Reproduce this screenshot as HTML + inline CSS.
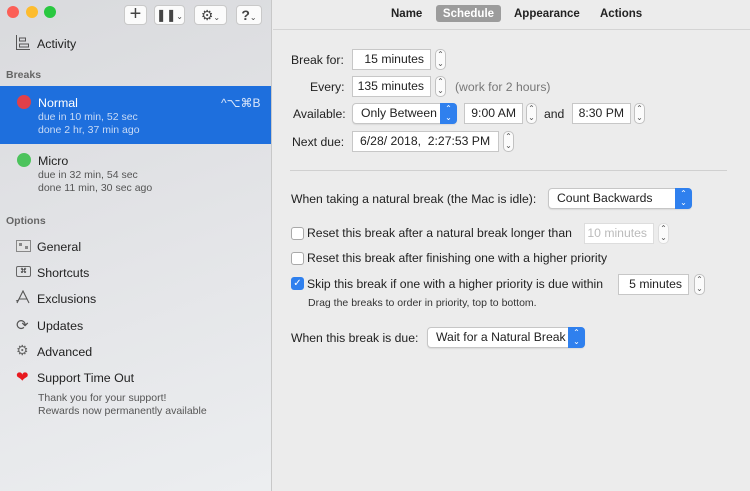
<!DOCTYPE html>
<html><head><meta charset="utf-8"><style>
*{margin:0;padding:0;box-sizing:border-box}
body{width:750px;height:491px;overflow:hidden;font-family:"Liberation Sans",sans-serif;font-size:12.2px;color:#222;background:#ececec;position:relative}
.a{position:absolute;white-space:nowrap}
#side{position:absolute;left:0;top:0;width:272px;height:491px;background:linear-gradient(160deg,#d9dadd 0%,#e3e4e7 50%,#eceef0 100%);border-right:1px solid #c8c8c8}
.tl{width:12px;height:12px;border-radius:50%;top:6px}
.tb{top:5px;height:20px;background:#fbfbfb;border:1px solid #c9c9c9;border-radius:4px;font-size:14px;color:#444;text-align:center;line-height:18px}
.sec{font-size:10.5px;color:#666;font-weight:bold}
.it{font-size:12.4px;color:#222}
.sub{font-size:10.5px;color:#555}
.fld{background:#fff;border:1px solid #c7c7c7;height:21px;font-size:12.2px;line-height:19px;text-align:right;padding-right:6px}
.st{width:11px;height:21px;border:1px solid #c2c2c2;border-radius:5px;background:#fbfbfb;font-size:8px;line-height:9px;text-align:center;color:#555}
.pop{background:#fff;border:1px solid #c6c6c6;border-radius:4px;height:21px;line-height:19px;padding-left:8px;box-shadow:0 1px 1px rgba(0,0,0,.08)}
.pop b{position:absolute;right:-1px;top:-1px;width:17px;height:21px;background:#2f80ee;border-radius:0 4px 4px 0;color:#fff;font-size:8px;line-height:9px;text-align:center;padding-top:1px;font-weight:normal}
.cb{width:13px;height:13px;border:1px solid #a9a9a9;border-radius:3px;background:#fff}
</style></head><body>
<div id="side">
<div class="a tl" style="left:7px;background:#fc5f57"></div>
<div class="a tl" style="left:26px;background:#fdbc2e"></div>
<div class="a tl" style="left:44px;background:#29c840"></div>
<div class="a tb" style="left:124px;width:23px;font-size:20px;line-height:17px">+</div>
<div class="a tb" style="left:154px;width:31px;font-size:12px">❚❚<span style="font-size:8px">⌄</span></div>
<div class="a tb" style="left:194px;width:33px">⚙<span style="font-size:8px">⌄</span></div>
<div class="a tb" style="left:236px;width:26px;font-weight:bold">?<span style="font-size:8px;font-weight:normal">⌄</span></div>
<svg class="a" style="left:16px;top:35px" width="14" height="15"><path d="M0.5 0v14.5H14M3.5 3h6v3h-6zM3.5 9h9v3h-9z" fill="none" stroke="#555"/></svg>
<div class="a it" style="left:37px;top:37px">Activity</div>
<div class="a sec" style="left:6px;top:69px">Breaks</div>
<div class="a" style="left:0;top:86px;width:271px;height:58px;background:#1e6fdd"></div>
<div class="a" style="left:17px;top:95px;width:14px;height:14px;border-radius:50%;background:#e0404a"></div>
<div class="a it" style="left:38px;top:96px;color:#fff">Normal</div>
<div class="a" style="left:221px;top:96px;color:#dbe7fa;font-size:12px">^⌥⌘B</div>
<div class="a sub" style="left:38px;top:111px;color:#c9dbf6">due in 10 min, 52 sec</div>
<div class="a sub" style="left:38px;top:124px;color:#c9dbf6">done 2 hr, 37 min ago</div>
<div class="a" style="left:17px;top:153px;width:14px;height:14px;border-radius:50%;background:#4cc35c"></div>
<div class="a it" style="left:38px;top:154px">Micro</div>
<div class="a sub" style="left:38px;top:169px">due in 32 min, 54 sec</div>
<div class="a sub" style="left:38px;top:182px">done 11 min, 30 sec ago</div>
<div class="a sec" style="left:6px;top:215px">Options</div>
<svg class="a" style="left:16px;top:240px" width="15" height="12"><rect x=".5" y=".5" width="14" height="11" fill="#e4e4e4" stroke="#888"/><rect x="3" y="3" width="3" height="3" fill="#888"/><rect x="9" y="6" width="3" height="3" fill="#888"/></svg>
<div class="a it" style="left:37px;top:240px">General</div>
<div class="a" style="left:16px;top:266px;width:15px;height:11px;border:1px solid #666;border-radius:2px;font-size:7px;text-align:center;line-height:9px">⌘</div>
<div class="a it" style="left:37px;top:266px">Shortcuts</div>
<svg class="a" style="left:15px;top:290px" width="16" height="14"><path d="M2 13L8 1L14 13M4 9h8M1 11l3-1" fill="none" stroke="#555" stroke-width="1.1"/></svg>
<div class="a it" style="left:37px;top:292px">Exclusions</div>
<div class="a" style="left:16px;top:316px;font-size:15px;color:#555">⟳</div>
<div class="a it" style="left:37px;top:319px">Updates</div>
<div class="a" style="left:16px;top:342px;font-size:14px;color:#666">⚙</div>
<div class="a it" style="left:37px;top:345px">Advanced</div>
<div class="a" style="left:16px;top:368px;font-size:15px;color:#e8191f">❤</div>
<div class="a it" style="left:37px;top:371px">Support Time Out</div>
<div class="a sub" style="left:38px;top:392px">Thank you for your support!</div>
<div class="a sub" style="left:38px;top:405px">Rewards now permanently available</div>
</div>

<div class="a" style="left:273px;top:29px;width:477px;height:1px;background:#d4d4d4"></div>
<div class="a" style="left:391px;top:8px;font-weight:bold;font-size:11.5px">Name</div>
<div class="a" style="left:436px;top:5px;width:65px;height:17px;background:#9c9c9c;border-radius:3px;color:#fff;font-weight:bold;font-size:11.5px;text-align:center;line-height:18px">Schedule</div>
<div class="a" style="left:514px;top:8px;font-weight:bold;font-size:11.5px">Appearance</div>
<div class="a" style="left:600px;top:8px;font-weight:bold;font-size:11.5px">Actions</div>

<div class="a" style="left:291px;top:53px">Break for:</div>
<div class="a fld" style="left:352px;top:49px;width:79px">15 minutes</div>
<div class="a st" style="left:435px;top:49px">⌃<br>⌄</div>
<div class="a" style="left:310px;top:80px">Every:</div>
<div class="a fld" style="left:352px;top:76px;width:79px">135 minutes</div>
<div class="a st" style="left:435px;top:76px">⌃<br>⌄</div>
<div class="a" style="left:455px;top:80px;color:#777">(work for 2 hours)</div>
<div class="a" style="left:293px;top:107px">Available:</div>
<div class="a pop" style="left:352px;top:103px;width:105px">Only Between<b>⌃<br>⌄</b></div>
<div class="a fld" style="left:464px;top:103px;width:59px">9:00 AM</div>
<div class="a st" style="left:526px;top:103px">⌃<br>⌄</div>
<div class="a" style="left:544px;top:107px">and</div>
<div class="a fld" style="left:572px;top:103px;width:59px">8:30 PM</div>
<div class="a st" style="left:634px;top:103px">⌃<br>⌄</div>
<div class="a" style="left:292px;top:135px">Next due:</div>
<div class="a fld" style="left:352px;top:131px;width:147px;text-align:left;padding-left:7px">6/28/ 2018,&nbsp;&nbsp;2:27:53 PM</div>
<div class="a st" style="left:503px;top:131px">⌃<br>⌄</div>
<div class="a" style="left:290px;top:170px;width:437px;height:1px;background:#d0d0d0"></div>

<div class="a" style="left:291px;top:192px">When taking a natural break (the Mac is idle):</div>
<div class="a pop" style="left:548px;top:188px;width:144px">Count Backwards<b>⌃<br>⌄</b></div>
<div class="a cb" style="left:291px;top:227px"></div>
<div class="a" style="left:307px;top:226px">Reset this break after a natural break longer than</div>
<div class="a fld" style="left:584px;top:223px;width:70px;color:#bbb;border-color:#ddd">10 minutes</div>
<div class="a st" style="left:658px;top:223px;border-color:#ddd">⌃<br>⌄</div>
<div class="a cb" style="left:291px;top:252px"></div>
<div class="a" style="left:307px;top:251px">Reset this break after finishing one with a higher priority</div>
<div class="a cb" style="left:291px;top:277px;background:#2f80ee;border-color:#2f80ee;color:#fff;font-size:10px;line-height:11px;text-align:center">✓</div>
<div class="a" style="left:307px;top:277px">Skip this break if one with a higher priority is due within</div>
<div class="a fld" style="left:618px;top:274px;width:71px">5 minutes</div>
<div class="a st" style="left:694px;top:274px">⌃<br>⌄</div>
<div class="a" style="left:308px;top:297px;font-size:10.5px;color:#333">Drag the breaks to order in priority, top to bottom.</div>
<div class="a" style="left:291px;top:331px">When this break is due:</div>
<div class="a pop" style="left:427px;top:327px;width:158px">Wait for a Natural Break<b>⌃<br>⌄</b></div>
</body></html>
